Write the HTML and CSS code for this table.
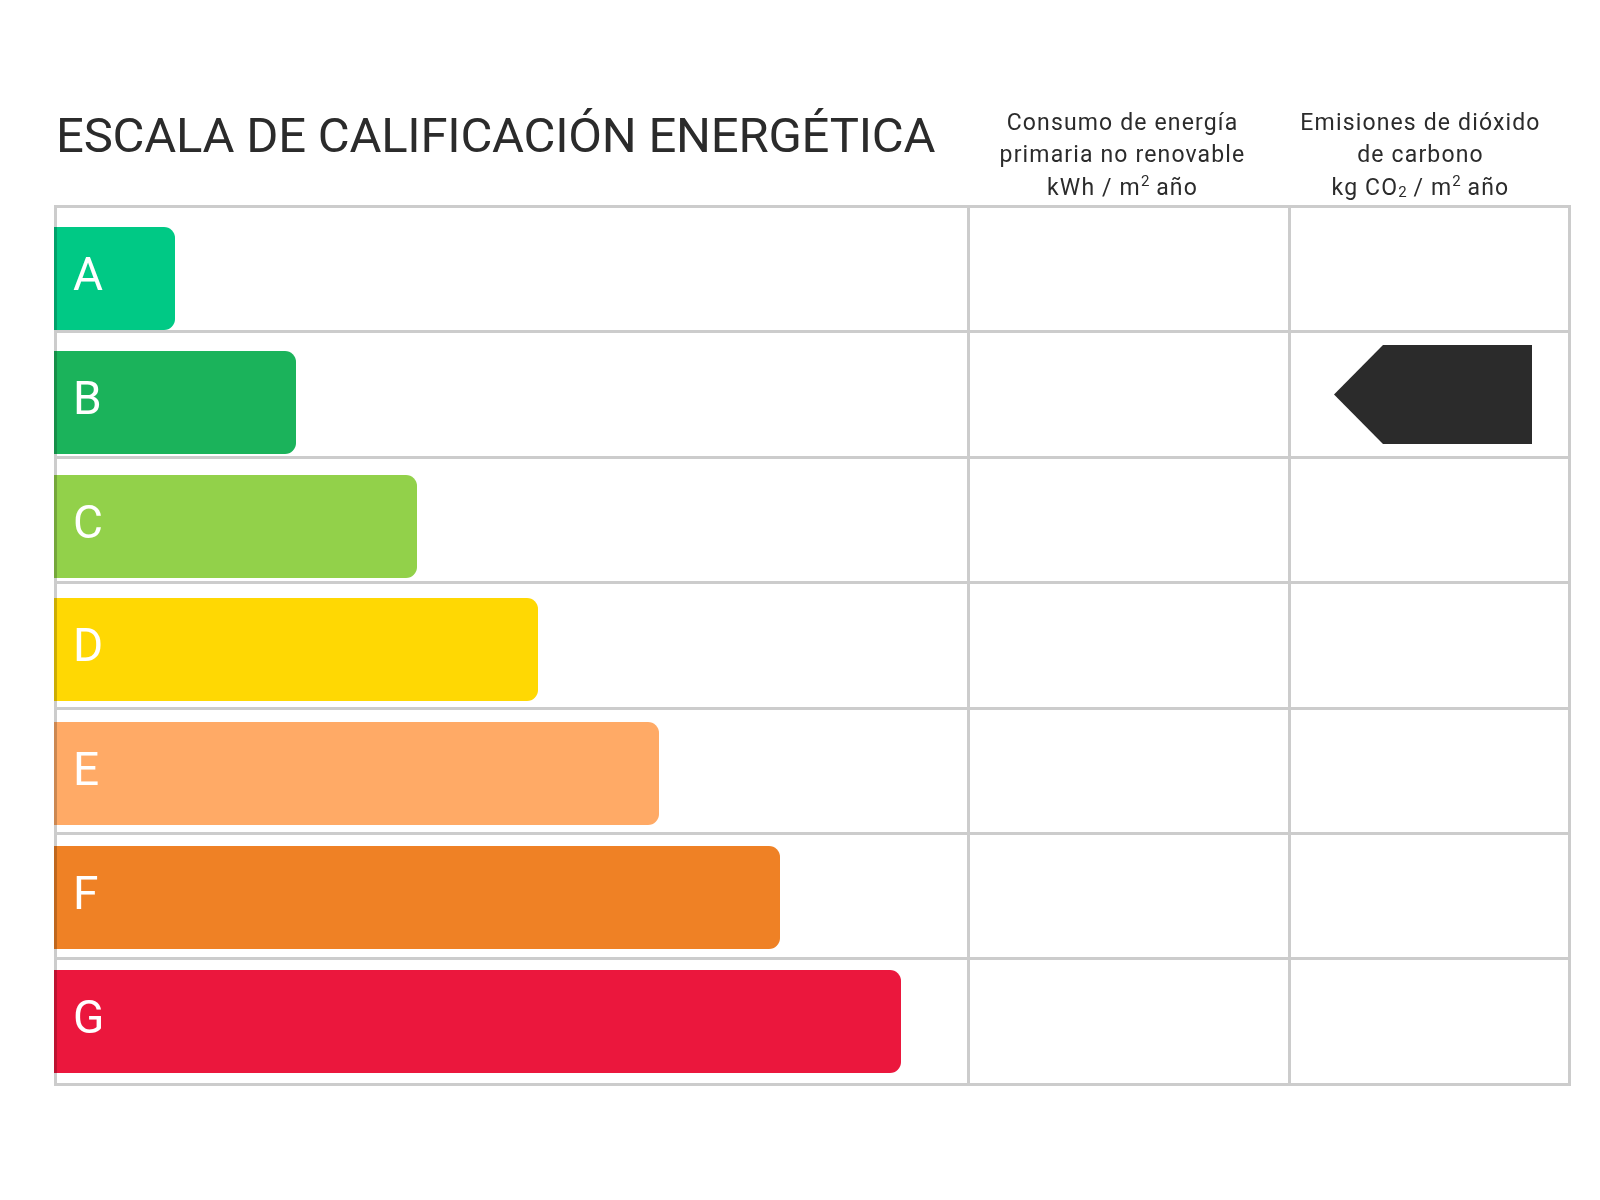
FILE: index.html
```
<!DOCTYPE html>
<html lang="es">
<head>
<meta charset="utf-8">
<title>Escala de calificación energética</title>
<link rel="stylesheet" href="styles.css">
</head>
<body>
<div class="page">
  <div class="head">
    <h1 class="title">ESCALA DE CALIFICACIÓN ENERGÉTICA</h1>
    <div class="colhead colhead-energy">Consumo de energía<br>primaria no renovable<br>kWh / m<sup>2</sup> año</div>
    <div class="colhead colhead-co2">Emisiones de dióxido<br>de carbono<br>kg CO<sub>2</sub> / m<sup>2</sup> año</div>
  </div>
  <div class="table">
    <div class="grid">
      <div class="cell"></div><div class="cell"></div><div class="cell"></div>
      <div class="cell"></div><div class="cell"></div><div class="cell cell-mark">
        <svg class="arrow" width="198" height="99" viewBox="0 0 198 99"><polygon points="0,49.5 49,0 198,0 198,99 49,99" fill="#2b2b2b"/></svg>
      </div>
      <div class="cell"></div><div class="cell"></div><div class="cell"></div>
      <div class="cell"></div><div class="cell"></div><div class="cell"></div>
      <div class="cell"></div><div class="cell"></div><div class="cell"></div>
      <div class="cell"></div><div class="cell"></div><div class="cell"></div>
      <div class="cell"></div><div class="cell"></div><div class="cell"></div>
    </div>
    <div class="bars">
      <div class="bar bar-a">A</div>
      <div class="bar bar-b">B</div>
      <div class="bar bar-c">C</div>
      <div class="bar bar-d">D</div>
      <div class="bar bar-e">E</div>
      <div class="bar bar-f">F</div>
      <div class="bar bar-g">G</div>
    </div>
  </div>
</div>
</body>
</html>
```
FILE: styles.css
```
html, body {
  margin: 0;
  padding: 0;
  background: #ffffff;
}
body {
  font-family: Roboto, "Liberation Sans", sans-serif;
  color: #2b2b2b;
}
.page {
  padding-left: 54px;
  width: 1517px;
}
.head {
  display: grid;
  grid-template-columns: 913px 321px 283px;
  height: 205px;
}
.title {
  margin: 0;
  padding: 111px 0 0 2px;
  font-size: 49px;
  line-height: 1;
  font-weight: 400;
  letter-spacing: -0.22px;
  white-space: nowrap;
  align-self: start;
}
.colhead {
  align-self: end;
  text-align: center;
  font-size: 23px;
  line-height: 32.5px;
  letter-spacing: 1.15px;
  margin-bottom: 1px;
  white-space: nowrap;
}
.colhead-energy {
  padding-right: 10px;
}
.colhead-co2 {
  padding-right: 18px;
}
.colhead sup {
  font-size: 15px;
  line-height: 0;
  letter-spacing: 0;
  vertical-align: 9px;
}
.colhead sub {
  font-size: 15px;
  line-height: 0;
  letter-spacing: 0;
  vertical-align: -2px;
}
.table {
  position: relative;
}
.grid {
  display: grid;
  grid-template-columns: 910px 318px 277px;
  grid-template-rows: repeat(7, 122.4px);
  gap: 3px;
  padding: 3px;
  background: #cccccc;
}
.cell {
  background: #ffffff;
}
.cell-mark {
  display: flex;
  align-items: center;
  justify-content: flex-end;
  padding-right: 36px;
}
.arrow {
  display: block;
}
.bars {
  position: absolute;
  left: 0;
  top: 22px;
  display: flex;
  flex-direction: column;
  gap: 20.8px;
}
.bar {
  height: 103px;
  box-sizing: border-box;
  padding: 24px 0 0 19px;
  border-radius: 0 11px 11px 0;
  color: #ffffff;
  font-size: 46px;
  line-height: 1;
  mix-blend-mode: multiply;
}
.bar-a { width: 121px; background: #00c985; }
.bar-b { width: 242px; background: #1bb35b; }
.bar-c { width: 363px; background: #92d14a; }
.bar-d { width: 484px; background: #ffd803; }
.bar-e { width: 605px; background: #ffaa66; }
.bar-f { width: 726px; background: #ef8125; }
.bar-g { width: 847px; background: #eb173d; }
```
